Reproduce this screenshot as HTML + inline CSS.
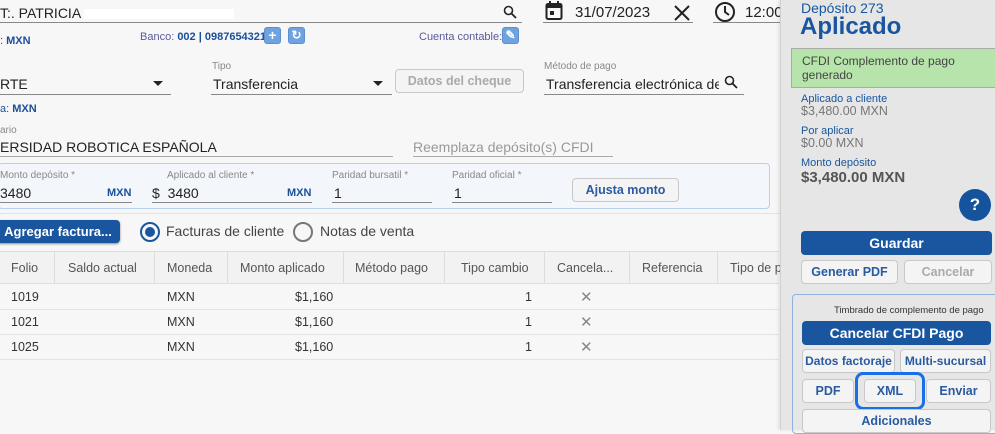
<!DOCTYPE html>
<html><head><meta charset="utf-8">
<style>
*{box-sizing:border-box;margin:0;padding:0}
body{width:995px;height:430px;overflow:hidden;background:#f7f7f7;font-family:"Liberation Sans",sans-serif;position:relative;color:#222}
.a{position:absolute;white-space:nowrap}
.ul{position:absolute;height:1px;background:#888}
.lbl{position:absolute;font-size:10px;color:#888;white-space:nowrap}
.val{position:absolute;font-size:14px;color:#222;white-space:nowrap}
.blue{color:#1a4f9a}
.btn{position:absolute;border:1px solid #c8c8c8;border-radius:4px;background:#f4f4f4;color:#2a5aa0;font-size:12.5px;font-weight:bold;text-align:center;white-space:nowrap;overflow:hidden}
.pb{position:absolute;background:#1a56a0;color:#fff;border-radius:4px;text-align:center;font-weight:bold;font-size:14px;white-space:nowrap;overflow:hidden}
.ib{position:absolute;width:17px;height:17px;background:#6fa3e0;border:1px solid #5c8fd0;border-radius:3px;color:#fff;font-size:14px;font-weight:bold;text-align:center;line-height:15px}
.tri{position:absolute;width:0;height:0;border-left:5px solid transparent;border-right:5px solid transparent;border-top:5px solid #222}
.col{position:absolute;top:251px;height:33px;width:1px;background:#ddd}
.row{position:absolute;left:0;width:779px;height:1px;background:#e3e3e3}
.c{position:absolute;font-size:12.5px;color:#333;white-space:nowrap}
.h{position:absolute;font-size:12.5px;color:#555;top:261px;white-space:nowrap}
</style></head><body>
<div class="val" style="left:0;top:5px">T:. PATRICIA <span style="display:inline-block;width:150px;height:10px;background:#fff;vertical-align:middle"></span></div>
<div class="ul" style="left:0;top:22px;width:522px"></div>
<svg class="a" style="left:503px;top:5px" width="14" height="14" viewBox="0 0 14 14"><circle cx="5.5" cy="5.5" r="4" fill="none" stroke="#222" stroke-width="1.6"/><path d="M8.5 8.5L13 13" stroke="#222" stroke-width="1.8"/></svg>
<svg class="a" style="left:545px;top:1px" width="18" height="20" viewBox="0 0 18 20"><rect x="1.5" y="3" width="15" height="15" rx="1.5" fill="none" stroke="#222" stroke-width="2"/><rect x="1.5" y="3" width="15" height="4" fill="#222"/><rect x="4" y="0" width="2" height="4" fill="#222"/><rect x="12" y="0" width="2" height="4" fill="#222"/><rect x="5" y="10" width="4" height="4" fill="#222"/></svg>
<div class="val" style="left:575px;top:4px;font-size:15px">31/07/2023</div>
<svg class="a" style="left:674px;top:5px" width="16" height="16" viewBox="0 0 16 16"><path d="M1 1L15 15M15 1L1 15" stroke="#222" stroke-width="2"/></svg>
<div class="ul" style="left:543px;top:22px;width:150px"></div>
<svg class="a" style="left:714px;top:1px" width="22" height="22" viewBox="0 0 22 22"><circle cx="11" cy="11" r="9" fill="none" stroke="#222" stroke-width="2"/><path d="M11 5V11L15 14" fill="none" stroke="#222" stroke-width="2"/></svg>
<div class="val" style="left:745px;top:4px;font-size:15px">12:00</div>
<div class="ul" style="left:713px;top:22px;width:67px"></div>

<div class="a blue" style="left:0;top:35px;font-size:11px">: <b style="font-weight:600">MXN</b></div>
<div class="a" style="left:140px;top:31px;font-size:11px;color:#5a5a9a">Banco: <b class="blue" style="font-weight:600">002 | 0987654321</b></div>
<div class="ib" style="left:264px;top:27px">+</div>
<div class="ib" style="left:288px;top:27px;font-size:12px">↻</div>
<div class="a" style="left:419px;top:31px;font-size:11px;color:#5a5a9a">Cuenta contable:</div>
<div class="ib" style="left:502px;top:27px;font-size:12px">✎</div>

<div class="lbl" style="left:212px;top:61px">Tipo</div>
<div class="val" style="left:0;top:76px">RTE</div>
<div class="tri" style="left:153px;top:81px"></div>
<div class="ul" style="left:0;top:94px;width:171px"></div>
<div class="val" style="left:213px;top:76px">Transferencia</div>
<div class="tri" style="left:373px;top:81px"></div>
<div class="ul" style="left:211px;top:94px;width:181px"></div>
<div class="btn" style="left:395px;top:69px;width:129px;height:24px;line-height:22px;color:#aaa">Datos del cheque</div>
<div class="lbl" style="left:544px;top:61px">Método de pago</div>
<div class="val" style="left:546px;top:76px;width:173px;overflow:hidden">Transferencia electrónica de fondos</div>
<svg class="a" style="left:724px;top:75px" width="14" height="14" viewBox="0 0 14 14"><circle cx="5.5" cy="5.5" r="4" fill="none" stroke="#222" stroke-width="1.6"/><path d="M8.5 8.5L13 13" stroke="#222" stroke-width="1.8"/></svg>
<div class="ul" style="left:544px;top:94px;width:200px"></div>

<div class="a blue" style="left:0;top:103px;font-size:11px">a: <b style="font-weight:600">MXN</b></div>
<div class="lbl" style="left:0;top:125px">ario</div>
<div class="val" style="left:0;top:139px">ERSIDAD ROBOTICA ESPAÑOLA</div>
<div class="ul" style="left:0;top:156px;width:393px;background:#aaa"></div>
<div class="val" style="left:413px;top:139px;color:#999">Reemplaza depósito(s) CFDI</div>
<div class="ul" style="left:413px;top:156px;width:200px;background:#aaa"></div>

<div class="a" style="left:-2px;top:163px;width:772px;height:46px;border:1px solid #b8cff0;border-radius:4px;background:#f3f6fb"></div>
<div class="lbl" style="left:0;top:170px">Monto depósito *</div>
<div class="val" style="left:0;top:185px">3480</div>
<div class="a blue" style="left:107px;top:187px;font-size:11px;font-weight:bold">MXN</div>
<div class="ul" style="left:0;top:202px;width:132px"></div>
<div class="lbl" style="left:167px;top:170px">Aplicado al cliente *</div>
<div class="val" style="left:152px;top:185px">$ &nbsp;3480</div>
<div class="a blue" style="left:287px;top:187px;font-size:11px;font-weight:bold">MXN</div>
<div class="ul" style="left:152px;top:202px;width:160px"></div>
<div class="lbl" style="left:332px;top:170px">Paridad bursatil *</div>
<div class="val" style="left:334px;top:185px">1</div>
<div class="ul" style="left:332px;top:202px;width:100px"></div>
<div class="lbl" style="left:452px;top:170px">Paridad oficial *</div>
<div class="val" style="left:454px;top:185px">1</div>
<div class="ul" style="left:452px;top:202px;width:100px"></div>
<div class="btn" style="left:572px;top:178px;width:107px;height:24px;line-height:22px">Ajusta monto</div>

<div class="a" style="left:0;top:213px;width:780px;height:1px;background:#e3e3e3"></div>
<div class="pb" style="left:-4px;top:220px;width:124px;height:23px;line-height:23px;box-shadow:0 1px 2px #888;font-size:13px">Agregar factura...</div>
<div class="a" style="left:140px;top:222px;width:20px;height:20px;border:2px solid #1a56a0;border-radius:50%"><div style="position:absolute;left:3px;top:3px;width:10px;height:10px;border-radius:50%;background:#1a56a0"></div></div>
<div class="a" style="left:166px;top:223px;font-size:14px;color:#444">Facturas de cliente</div>
<div class="a" style="left:293px;top:222px;width:20px;height:20px;border:2px solid #777;border-radius:50%"></div>
<div class="a" style="left:320px;top:223px;font-size:14px;color:#444">Notas de venta</div>

<div class="a" style="left:0;top:251px;width:779px;height:33px;background:#f2f2f2;border-top:1px solid #ddd;border-bottom:1px solid #ddd"></div>
<div class="col" style="left:54px"></div><div class="col" style="left:154px"></div><div class="col" style="left:227px"></div><div class="col" style="left:343px"></div><div class="col" style="left:444px"></div><div class="col" style="left:544px"></div><div class="col" style="left:629px"></div><div class="col" style="left:717px"></div>
<div class="h" style="left:11px">Folio</div><div class="h" style="left:68px">Saldo actual</div><div class="h" style="left:167px">Moneda</div><div class="h" style="left:240px">Monto aplicado</div><div class="h" style="left:355px">Método pago</div><div class="h" style="left:461px">Tipo cambio</div><div class="h" style="left:557px">Cancela...</div><div class="h" style="left:642px">Referencia</div><div class="h" style="left:730px">Tipo de p</div>
<div class="row" style="top:309px"></div><div class="row" style="top:334px"></div><div class="row" style="top:359px"></div>
<div class="c" style="left:11px;top:290px">1019</div><div class="c" style="left:167px;top:290px">MXN</div><div class="c" style="left:295px;top:290px">$1,160</div><div class="c" style="left:525px;top:290px">1</div><div class="c" style="left:580px;top:288px;color:#888;font-size:15px">✕</div>
<div class="c" style="left:11px;top:315px">1021</div><div class="c" style="left:167px;top:315px">MXN</div><div class="c" style="left:295px;top:315px">$1,160</div><div class="c" style="left:525px;top:315px">1</div><div class="c" style="left:580px;top:313px;color:#888;font-size:15px">✕</div>
<div class="c" style="left:11px;top:340px">1025</div><div class="c" style="left:167px;top:340px">MXN</div><div class="c" style="left:295px;top:340px">$1,160</div><div class="c" style="left:525px;top:340px">1</div><div class="c" style="left:580px;top:338px;color:#888;font-size:15px">✕</div>

<div class="a" style="left:780px;top:0;width:215px;height:430px;background:#e6e6e6;border-left:1px solid #d0d0d0;box-shadow:-2px 0 3px rgba(0,0,0,.08)"></div>
<div class="a" style="left:801px;top:0;font-size:14px;color:#1a56a0">Depósito 273</div>
<div class="a" style="left:800px;top:13px;font-size:24px;font-weight:bold;color:#1a56a0">Aplicado</div>
<div class="a" style="left:791px;top:48px;width:210px;height:40px;background:#b6e4aa;border:1px solid #aaa;font-size:12px;color:#444;padding:5px 10px;line-height:14px;white-space:normal">CFDI Complemento de pago generado</div>
<div class="a" style="left:801px;top:93px;font-size:11px;color:#1a56a0">Aplicado a cliente</div>
<div class="a" style="left:801px;top:104px;font-size:12.5px;color:#777">$3,480.00 MXN</div>
<div class="a" style="left:801px;top:125px;font-size:11px;color:#1a56a0">Por aplicar</div>
<div class="a" style="left:801px;top:136px;font-size:12.5px;color:#777">$0.00 MXN</div>
<div class="a" style="left:801px;top:157px;font-size:11px;color:#1a56a0">Monto depósito</div>
<div class="a" style="left:801px;top:169px;font-size:15px;font-weight:bold;color:#555">$3,480.00 MXN</div>
<div class="a" style="left:959px;top:189px;width:32px;height:32px;border-radius:50%;background:#15539c;color:#fff;font-weight:bold;font-size:17px;text-align:center;line-height:32px">?</div>
<div class="pb" style="left:801px;top:231px;width:191px;height:24px;line-height:24px">Guardar</div>
<div class="btn" style="left:801px;top:260px;width:97px;height:24px;line-height:22px">Generar PDF</div>
<div class="btn" style="left:904px;top:260px;width:88px;height:24px;line-height:22px;color:#aaa">Cancelar</div>
<div class="a" style="left:792px;top:294px;width:210px;height:140px;border:1px solid #8fb0e0;border-radius:4px"></div>
<div class="a" style="left:834px;top:305px;font-size:9.5px;color:#333">Timbrado de complemento de pago</div>
<div class="pb" style="left:802px;top:321px;width:189px;height:24px;line-height:24px">Cancelar CFDI Pago</div>
<div class="btn" style="left:802px;top:349px;width:93px;height:24px;line-height:22px;font-size:12px">Datos factoraje</div>
<div class="btn" style="left:900px;top:349px;width:91px;height:24px;line-height:22px;font-size:12px">Multi-sucursal</div>
<div class="btn" style="left:802px;top:379px;width:52px;height:24px;line-height:22px">PDF</div>
<div class="a" style="left:855px;top:372px;width:70px;height:38px;border:3px solid #1a6fe8;border-radius:8px"></div>
<div class="btn" style="left:864px;top:379px;width:52px;height:24px;line-height:22px">XML</div>
<div class="btn" style="left:926px;top:379px;width:65px;height:24px;line-height:22px">Enviar</div>
<div class="btn" style="left:802px;top:409px;width:189px;height:24px;line-height:22px">Adicionales</div>
</body></html>
